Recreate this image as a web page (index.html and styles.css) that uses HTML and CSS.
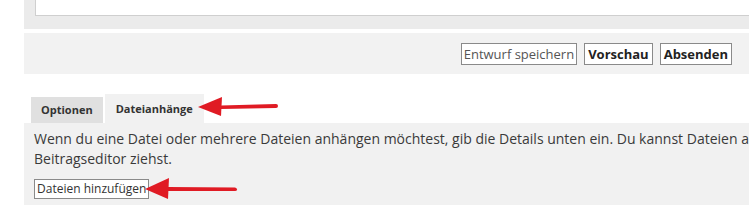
FILE: index.html
```html
<!DOCTYPE html>
<html lang="de">
<head>
<meta charset="utf-8">
<title>Beitrag</title>
<link rel="stylesheet" href="styles.css">
</head>
<body>
<div class="page">
  <div class="editor-wrap">
    <div class="editor-box"></div>
  </div>
  <div class="submit-bar">
    <button class="btn btn-light">Entwurf speichern</button>
    <button class="btn btn-bold">Vorschau</button>
    <button class="btn btn-bold">Absenden</button>
  </div>
  <div class="tabs">
    <div class="tab">Optionen</div>
    <div class="tab tab-active">Dateianhänge</div>
  </div>
  <div class="panel">
    <p class="panel-text">Wenn du eine Datei oder mehrere Dateien anhängen möchtest, gib die Details unten ein. Du kannst Dateien auch anhängen, indem du sie per Drag and Drop in den<br>Beitragseditor ziehst.</p>
    <button class="btn btn-add">Dateien hinzufügen</button>
  </div>
  <svg class="arrow arrow-tab" width="90" height="24" viewBox="0 0 90 24">
    <path d="M24 10.5 L79 9 Q81 9 81 11 Q81 13 79 13 L24 14 Z" fill="#e01b24"/>
    <polygon points="1,12 25,2 24,21" fill="#e01b24"/>
  </svg>
  <svg class="arrow arrow-add" width="100" height="24" viewBox="0 0 100 24">
    <path d="M24 10 L91 10.5 Q93 11 93 12.5 Q93 14 91 14 L24 14 Z" fill="#e01b24"/>
    <polygon points="1,12 25,1 24,22" fill="#e01b24"/>
  </svg>
</div>
</body>
</html>
```
FILE: styles.css
```css
html, body {
  margin: 0;
  padding: 0;
  overflow: hidden;
  background: #ffffff;
}
.page {
  position: relative;
  width: 749px;
  height: 205px;
  overflow: hidden;
  font-family: "Open Sans", "DejaVu Sans", sans-serif;
  color: #3a3a3a;
}
.editor-wrap {
  margin-left: 24px;
  width: 760px;
  height: 29px;
  background: #ebebeb;
  padding-left: 11px;
  box-sizing: border-box;
}
.editor-box {
  width: 760px;
  height: 16px;
  background: #ffffff;
  border-left: 1px solid #cfcfcf;
  border-bottom: 1px solid #cfcfcf;
  box-sizing: border-box;
}
.submit-bar {
  margin-top: 4px;
  margin-left: 24px;
  height: 41px;
  background: #f2f2f2;
  display: flex;
  justify-content: flex-end;
  align-items: flex-start;
  gap: 7px;
  padding: 10px 17px 0 0;
  box-sizing: border-box;
}
.btn {
  font-family: inherit;
  font-size: 13px;
  background: #ffffff;
  border: 1px solid #8a8a8a;
  height: 22px;
  padding: 0 3px;
  margin: 0;
  line-height: 20px;
  color: #555555;
  cursor: pointer;
}
.btn-light {
  font-weight: 400;
  color: #555555;
  padding: 0 2px;
}
.btn-bold {
  font-weight: 700;
  color: #222222;
}
.tabs {
  margin-top: 20px;
  margin-left: 31px;
  display: flex;
  align-items: flex-end;
  gap: 2px;
  height: 29px;
}
.tab {
  font-size: 11px;
  font-weight: 700;
  color: #333333;
  background: #e0e0e0;
  height: 26px;
  line-height: 26px;
  padding: 0 10px;
  box-sizing: border-box;
}
.tab-active {
  background: #f1f1f1;
  height: 29px;
  line-height: 29px;
  padding: 0 11px;
}
.panel {
  margin-left: 24px;
  background: #f1f1f1;
  height: 90px;
  padding: 6px 0 0 10px;
  width: 760px;
  box-sizing: border-box;
}
.panel-text {
  margin: 0;
  font-size: 14px;
  line-height: 20px;
  white-space: nowrap;
}
.btn-add {
  margin-top: 10px;
  font-size: 12px;
  height: 20px;
  line-height: 18px;
  padding: 0 2px;
  color: #333333;
}
.arrow {
  position: absolute;
}
.arrow-tab {
  left: 197px;
  top: 95px;
}
.arrow-add {
  left: 144px;
  top: 177px;
}
```
